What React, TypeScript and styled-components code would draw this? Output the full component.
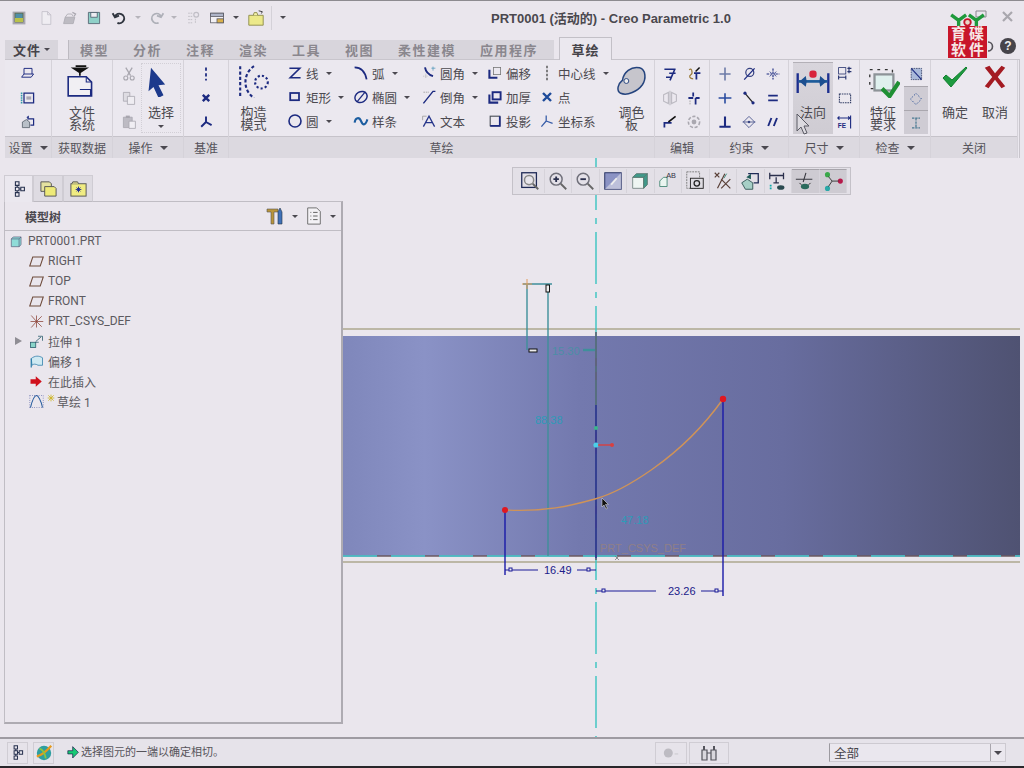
import React from "react";
import styled, { createGlobalStyle } from "styled-components";

const NAVY = "#1c2a80";
const GREY = "#a8a6ae";
const TEAL = "#3f8f9a";

const Global = createGlobalStyle`
  html, body { margin: 0; padding: 0; background: #eae6ed; }
  body { font-family: "Liberation Sans", "Noto Sans CJK SC", sans-serif; }
`;

const icons: Record<string, React.ReactNode> = {
  app: (<><rect x="2" y="2" width="16" height="16" fill="#a9a7b0" /><rect x="5" y="4" width="10" height="11" fill="#4f8fa8" stroke="#5b6a48" /><rect x="5" y="10" width="10" height="5" fill="#b9c24a" /></>),
  newFile: (<path d="M5 2h7l4 4v12H5z M12 2v4h4" fill="#efedf2" stroke="#c0bec6" />),
  open: (<><path d="M2 17l2-8h12l-2 8z" fill="#bdbbc2" stroke="#aaa8b0" /><path d="M4 9l3-4h5l2 3" fill="none" stroke="#aaa8b0" /><path d="M13 3l4 2-2 3" fill="none" stroke="#aaa8b0" strokeWidth="1.5" /></>),
  save: (<><path d="M3 3h14v14H3z" fill="#8fd0c8" stroke="#4b5a6a" /><rect x="6" y="3" width="8" height="6" fill="#eeecf2" stroke="#4b5a6a" /></>),
  undo: (<path d="M5 8a6 6 0 1 1 3 8M2 4l3 5 5-2" fill="none" stroke="#30353f" strokeWidth="2.4" />),
  redo: (<path d="M15 8a6 6 0 1 0-3 8M18 4l-3 5-5-2" fill="none" stroke="#aeb0b8" strokeWidth="2.2" />),
  regen: (<><path d="M4 4h5M4 8h5M4 12h5M4 16h5M13 16v-6" stroke="#b8b6bc" strokeDasharray="2 1" fill="none" /><circle cx="14" cy="6" r="3" fill="none" stroke="#c0bec6" strokeWidth="1.5" /></>),
  windows: (<><rect x="2" y="4" width="16" height="12" fill="#f2f0f4" stroke="#5a5a64" /><rect x="2" y="4" width="16" height="4" fill="#aeb4c8" stroke="#5a5a64" /><rect x="10" y="11" width="8" height="5" fill="#d9b04a" stroke="#5a5a64" /></>),
  folder: (<><path d="M2 7h16v11H2z" fill="#ece98a" stroke="#8b8a4a" /><path d="M7 7l1-3h3l1 3" fill="#f3f1a8" stroke="#8b8a4a" /><path d="M13 2l4 1-1 2" stroke="#333" fill="none" /></>),
  plane: (<><path d="M2 14h12l3-4H5z" fill="none" stroke={NAVY} strokeWidth="1.2" /><path d="M5 10V3h10v7" fill="none" stroke={NAVY} strokeWidth="1.2" /></>),
  ref: (<><path d="M5 4h12v12H5z" fill="none" stroke={NAVY} strokeWidth="1.6" /><path d="M2 3v14" stroke="#39a" strokeDasharray="2 1" strokeWidth="2" /><rect x="8" y="8" width="6" height="4" fill="#a9a7b4" /></>),
  setup: (<><path d="M9 6h8v8h-4" fill="none" stroke={NAVY} strokeWidth="1.5" /><path d="M3 10l5-3 4 3v7H3z" fill="#b9c0c8" stroke="#56606a" /><path d="M8 4l3-2v4z" fill={NAVY} /></>),
  fileSys: (<><path d="M3 12h17l5 5v13H3z" fill="#f1eff3" stroke={NAVY} strokeWidth="1.5" /><path d="M20 12v5h5" fill="none" stroke={NAVY} /><path d="M14 24h10v6" fill="none" stroke={NAVY} /><path d="M8 4h12l-6 4z M14 8v3 M10 2h10" fill="#111" stroke="#111" strokeWidth="1.6" /></>),
  cut2: (<><path d="M6 2l6 10M14 2L8 12" stroke={GREY} strokeWidth="1.6" fill="none" /><circle cx="6" cy="15" r="2.5" fill="none" stroke={GREY} strokeWidth="1.4" /><circle cx="14" cy="15" r="2.5" fill="none" stroke={GREY} strokeWidth="1.4" /></>),
  copy: (<><path d="M3 3h8v11H3z" fill="#dedce2" stroke={GREY} /><path d="M8 8h9v10H8z" fill="#efedf2" stroke={GREY} /></>),
  paste: (<><path d="M3 4h11v13H3z" fill="#bdbbc3" stroke={GREY} /><path d="M10 9h8v9h-8z" fill="#f0eef3" stroke={GREY} /><rect x="6" y="2" width="5" height="3" fill={GREY} /></>),
  arrow: (<path d="M6 1l17 20-8 1 6 12-6 3-6-13-6 5z" fill="#1d3a8c" />),
  dotted: (<path d="M10 2v16" stroke={NAVY} strokeWidth="2.2" strokeDasharray="4 3" />),
  xPoint: (<path d="M6 6l8 8M14 6l-8 8" stroke={NAVY} strokeWidth="3" />),
  csys: (<path d="M10 10V3M10 10l-6 6M10 10l7 4" stroke={NAVY} strokeWidth="2.4" fill="none" />),
  construct: (<><path d="M3 2v29" stroke={NAVY} strokeWidth="2" strokeDasharray="3 2" /><path d="M16 2a18 18 0 0 0 0 30" stroke={NAVY} strokeWidth="2" strokeDasharray="3 2" fill="none" /><circle cx="23" cy="17" r="6" fill="none" stroke={NAVY} strokeWidth="2" strokeDasharray="2 2" /></>),
  line: (<path d="M3 4h13L4 16h13" fill="none" stroke={NAVY} strokeWidth="2" />),
  rect: (<rect x="4" y="5" width="11" height="9" fill="none" stroke={NAVY} strokeWidth="2.2" />),
  circle: (<circle cx="10" cy="10" r="7.5" fill="none" stroke={NAVY} strokeWidth="2" />),
  arc: (<path d="M2 3c7 0 13 5 15 15" fill="none" stroke={NAVY} strokeWidth="2.2" />),
  ellipse: (<><ellipse cx="10" cy="10" rx="8" ry="6.5" transform="rotate(-30 10 10)" fill="none" stroke={NAVY} strokeWidth="1.8" /><path d="M5 16L15 4" stroke={NAVY} strokeWidth="1.6" /></>),
  spline: (<path d="M2 12c1-7 6-7 8-2s5 7 8-2" fill="none" stroke="#1b5da0" strokeWidth="2.6" />),
  fillet: (<><path d="M5 3c1 6 4 9 10 11" fill="none" stroke={NAVY} strokeWidth="2.4" /><path d="M3 14h6M6 11v6" stroke="#aaa" strokeDasharray="1 1" /><path d="M15 2v5M13 4h5" stroke="#59b" /></>),
  chamfer: (<><path d="M3 18L15 3h3" fill="none" stroke={NAVY} strokeWidth="1.8" /><path d="M3 4h7" stroke="#999" strokeDasharray="2 1" /></>),
  textA: (<><path d="M3 17L10 4l7 13M6 12h8" fill="none" stroke="#26358a" strokeWidth="1.6" /><path d="M2 4h5M2 4v5" stroke="#999" /></>),
  offset: (<><path d="M3 6v10h10" fill="none" stroke={NAVY} strokeWidth="2.6" /><rect x="8" y="3" width="9" height="9" fill="none" stroke="#777" /></>),
  thick: (<><path d="M3 7v10h11" fill="none" stroke={NAVY} strokeWidth="2.6" /><rect x="7" y="4" width="10" height="9" fill="none" stroke={NAVY} strokeWidth="2.4" /></>),
  project: (<><rect x="4" y="4" width="12" height="12" fill="none" stroke="#4a5058" strokeWidth="1.4" /><path d="M4 16h12V4" fill="none" stroke={NAVY} strokeWidth="2.2" /></>),
  cline: (<path d="M10 1v18" stroke="#555" strokeWidth="1.8" strokeDasharray="3 2" />),
  xBlue: (<path d="M5 5l10 10M15 5L5 15" stroke="#1d4a9a" strokeWidth="3" />),
  csysThin: (<path d="M9 10V3M9 10l-6 7M9 10l8 3" stroke="#375da8" strokeWidth="1.6" fill="none" />),
  palette: (<><path d="M6 31c-5-3-3-10 2-14C9 9 17 2 26 4c7 2 7 12 3 18-5 7-16 12-23 9z" fill="#c6c5cc" stroke="#25447e" strokeWidth="1.6" /><circle cx="12" cy="18" r="2.6" fill="#eee" stroke="#25447e" /></>),
  edit1: (<path d="M3 4h14M9 9h8M16 4L10 18M5 14h6" fill="none" stroke={NAVY} strokeWidth="2" />),
  edit2: (<><path d="M4 5c3-4 5 4 2 6s-1 5 3 5" fill="none" stroke="#9a7a3a" strokeWidth="1.5" /><path d="M10 9h8M13 9v8" stroke={NAVY} strokeWidth="2.2" /><path d="M17 2l-5 5" stroke="#111" strokeWidth="1.8" /></>),
  mirror: (<path d="M2 6l6-3v14l-6-3zM18 6l-6-3v14l6-3zM10 1v18" fill="none" stroke="#bcbac2" strokeWidth="1.4" />),
  divide: (<><path d="M3 10h6M12 10h5M12 10v8M9 3v5" stroke={NAVY} strokeWidth="2.2" /><path d="M5 13v6" stroke="#999" strokeDasharray="2 1" /></>),
  trim: (<><path d="M3 17V11h9" fill="none" stroke={NAVY} strokeWidth="2.2" /><path d="M17 3L8 10" stroke="#111" strokeWidth="2" /></>),
  rotate: (<><circle cx="10" cy="10" r="7" fill="none" stroke="#aaa8b0" strokeWidth="2" strokeDasharray="4 2" /><circle cx="10" cy="10" r="3" fill="#aaa8b0" /></>),
  vert: (<path d="M10 2v16M3 10h14" stroke="#6d7ba8" strokeWidth="2" />),
  tangent: (<><circle cx="11" cy="8" r="5" fill="none" stroke="#333f7f" strokeWidth="1.5" /><path d="M4 17L17 3" stroke={NAVY} strokeWidth="1.6" /></>),
  midpt: (<><path d="M2 10h5M13 10h5M10 3v14" stroke={NAVY} strokeWidth="1.4" strokeDasharray="3 1" /><path d="M6 7l3 3-3 3M14 7l-3 3 3 3" fill="none" stroke={NAVY} /></>),
  horiz: (<path d="M2 10h16M10 4v13" stroke="#2a4ba0" strokeWidth="2" />),
  coinc: (<><path d="M4 3l12 14" stroke="#222" strokeWidth="1.6" /><circle cx="5" cy="4" r="2" fill={NAVY} /><circle cx="15" cy="16" r="2" fill={NAVY} /></>),
  equal: (<path d="M4 7h12M4 13h12" stroke={NAVY} strokeWidth="2.2" />),
  perp: (<path d="M10 3v13M3 16h14" stroke={NAVY} strokeWidth="2.6" />),
  sym: (<><path d="M2 10h16" stroke="#3a4684" /><path d="M10 3l7 7-7 7-7-7z" fill="none" stroke="#3a4684" /><circle cx="10" cy="10" r="1.6" fill="#3a4684" /></>),
  par: (<path d="M8 5L4 15M15 5l-4 10" stroke={NAVY} strokeWidth="2.4" />),
  normal: (<><path d="M3 7v22M37 7v22" stroke="#1d2f8f" strokeWidth="2.6" /><path d="M4 16h32" stroke="#1c5b9a" strokeWidth="3" /><path d="M13 16l-8 0 7-6zM27 16l8 0-7-6zM13 16l-8 0 7 6zM27 16l8 0-7 6z" fill="#1c4f90" /><rect x="16" y="4" width="8" height="8" rx="3" fill="#d8233a" /></>),
  dimTop: (<><rect x="2" y="2" width="9" height="8" fill="none" stroke="#28346f" /><path d="M13 3h5M13 7h5M15 1v8M2 14h9M2 12v5M11 12v5" stroke="#28346f" strokeWidth="1.4" /></>),
  dimBox: (<rect x="3" y="5" width="14" height="11" fill="none" stroke="#333f66" strokeWidth="1.4" strokeDasharray="2 1" />),
  dimFe: (<><path d="M2 5h13M17 2v16M3 3l-2 2 2 2M14 3l2 2-2 2" stroke={NAVY} strokeWidth="1.4" fill="none" /><text x="1" y="17" fontSize="8" fontWeight="700" fill={NAVY} fontFamily="Liberation Sans">FE</text></>),
  feature: (<><rect x="4" y="6" width="24" height="20" fill="none" stroke="#333" strokeWidth="1.4" strokeDasharray="3 5" /><rect x="9" y="11" width="20" height="17" fill="#dff0ee" stroke="#8d9398" strokeWidth="2.4" /><path d="M17 26l8 8 10-15" fill="none" stroke="#1f8f34" strokeWidth="4.4" /></>),
  check1: (<><rect x="4" y="3" width="13" height="14" fill="#a9b9d9" stroke="#333f66" strokeDasharray="2 1" /><path d="M4 3l13 14" stroke={NAVY} strokeWidth="1.4" /></>),
  check2: (<path d="M10 3l7 7-7 7-7-7z" fill="none" stroke="#385a9a" strokeWidth="1.2" strokeDasharray="2 2" />),
  check3: (<path d="M5 4h10M5 16h10M10 4v12" stroke="#4b7a92" strokeWidth="1.6" strokeDasharray="3 1" />),
  ok: (<path d="M2 14l8 9L26 4l-1-1-14 13-6-5z" fill="#1d9a3f" stroke="#12802f" strokeLinejoin="round" />),
  cancel: (<path d="M3 4l5-2 6 8 7-8 4 2-8 10 8 10-4 2-7-9-7 9-4-2 8-10z" fill="#a41a22" />),
  treeTab: (<path d="M6 2h4v4H6zM6 8h4v4H6zM6 14h4v4H6zM12 8h4v4h-4zM8 6v2M8 12v2M10 10h2" fill="none" stroke="#26304e" strokeWidth="1.2" />),
  foldersTab: (<><path d="M2 3h9l2 2v8H2z" fill="#e4e2a0" stroke="#555" /><path d="M6 8h10l2 2v8H6z" fill="#eeea78" stroke="#555" /></>),
  starFolder: (<><rect x="2" y="5" width="16" height="13" fill="#f0ec82" stroke="#555" /><path d="M3 5l1-2h5l1 2" fill="#dcd98a" stroke="#555" /><path d="M10 8v6M7 11h6M8 9l4 4M12 9l-4 4" stroke="#1f2a90" /></>),
  tools: (<><path d="M2 3h11v3H9v12H6V6H2z" fill="#b9953a" stroke="#555" strokeWidth=".6" /><path d="M13 18V6l2-4 2 4v12z" fill="#3f71b8" stroke="#234" strokeWidth=".6" /></>),
  listDoc: (<><path d="M3 1h10l4 4v14H3z" fill="#f3f1f5" stroke="#666" /><path d="M6 6h1M9 6h5M6 10h1M9 10h5M6 14h1M9 14h5" stroke="#555" /></>),
  part: (<><path d="M2 6l3-3h12v12l-3 3H2z" fill="#8fdcd8" stroke="#557" /><path d="M2 6h12v12M14 6l3-3" fill="none" stroke="#557" /></>),
  datum: (<path d="M1 16L5 4h14l-4 12z" fill="none" stroke="#6d4a3a" strokeWidth="1.4" />),
  csysTree: (<path d="M10 10L3 2M10 10L17 3M10 10L3 18M10 10l7 7M10 10H2M10 10h9M10 2v16" stroke="#8a4034" strokeWidth="1" fill="none" />),
  extrude: (<><rect x="2" y="11" width="7" height="7" fill="#88d4c8" stroke="#256" /><path d="M9 10l7-6M12 3h6v6M9 11h4" fill="none" stroke="#256" /></>),
  offsetTree: (<><path d="M3 6c5-4 10-4 15-1v10H12c-3-2-6-2-8 0z" fill="#cfe9f2" stroke="#2a7ba8" /><path d="M3 6v12" stroke="#2a7ba8" strokeWidth="1.6" /></>),
  insert: (<path d="M2 7h7V3l8 7-8 7v-4H2z" fill="#d0101c" />),
  sketchTree: (<><path d="M2 18C5 6 8 2 10 2s6 6 8 16" fill="none" stroke="#2a5fa0" strokeWidth="1.4" /><path d="M1 2h18M1 2v16M19 2v16M1 18h18" stroke="#2c3c90" strokeWidth=".8" strokeDasharray="1 2" /></>),
  star: (<path d="M6 1v10M1 6h10M2 2l8 8M10 2l-8 8" stroke="#cbb21e" strokeWidth="1.2" />),
  greenArrow: (<path d="M1 7h6V2l7 7-7 7v-5H1z" fill="#17c874" stroke="#114" strokeWidth=".8" />),
  globe: (<><circle cx="10" cy="10" r="8" fill="#2f9fa0" /><path d="M2 14C8 12 13 8 18 2" stroke="#e69a1c" strokeWidth="2.4" fill="none" /><path d="M5 5c3 1 6 5 7 11" stroke="#8cc63f" strokeWidth="2" fill="none" /></>),
  led: (<><circle cx="7" cy="10" r="5" fill="#bdbbc2" /><path d="M14 11h4" stroke="#d6d4da" strokeWidth="2" /></>),
  binoculars: (<><path d="M3 7h5v10H3zM12 7h5v10h-5zM8 10h4" fill="#d9d7dd" stroke="#54545c" strokeWidth="1.2" /><path d="M5 7V3M15 7V3" stroke="#54545c" strokeWidth="2" /></>),
  vZoomFit: (<><rect x="3" y="3" width="16" height="16" fill="none" stroke="#1f2a56" strokeWidth="1.4" /><circle cx="11" cy="11" r="5" fill="#e8e6ec" stroke="#888" strokeWidth="1.6" /><path d="M15 15l6 6" stroke="#666" strokeWidth="2" /></>),
  vZoomIn: (<><circle cx="10" cy="10" r="6.5" fill="none" stroke="#70707a" strokeWidth="1.6" /><path d="M7 10h6M10 7v6" stroke="#2a2f4c" strokeWidth="2" /><path d="M15 15l6 6" stroke="#666" strokeWidth="2" /></>),
  vZoomOut: (<><circle cx="10" cy="10" r="6.5" fill="none" stroke="#70707a" strokeWidth="1.6" /><path d="M7 10h6" stroke="#2a2f4c" strokeWidth="2" /><path d="M15 15l6 6" stroke="#666" strokeWidth="2" /></>),
  vRefit: (<><rect x="3" y="3" width="18" height="18" fill="#8b93c4" stroke="#1e2a5c" /><path d="M3 21L21 3v18z" fill="#e7e5ec" opacity=".55" /><path d="M10 16l6-7" stroke="#eee" strokeWidth="2" /></>),
  vCube: (<><path d="M4 8h12v12H4z" fill="#eef5f2" stroke="#7b8a88" /><path d="M4 8l4-4h12l-4 4zM16 8l4-4v12l-4 4z" fill="#3f9a8a" stroke="#5a7a72" /></>),
  vAb: (<><path d="M3 12l4-4h4v10H3z" fill="#eaf5f0" stroke="#4a8a78" /><text x="10" y="9" fontSize="8" fill="#334" fontFamily="Liberation Sans">AB</text></>),
  vCamera: (<><rect x="3" y="2" width="14" height="18" fill="none" stroke="#777" strokeDasharray="2 1" /><rect x="7" y="9" width="14" height="11" fill="#dedce2" stroke="#222" /><circle cx="14" cy="14.5" r="3" fill="none" stroke="#222" strokeWidth="1.4" /></>),
  vDatum: (<><path d="M3 3l5 5M8 3L3 8M14 4l-8 16M10 10l10 10M20 10L10 20" stroke="#5a4038" strokeWidth="1.3" /><path d="M16 4l-3 5" stroke="#3a8a7a" /></>),
  vSaved: (<><path d="M10 4h11v10h-5" fill="none" stroke="#1f2a56" strokeWidth="1.4" /><path d="M3 14l6-4 6 4v7H7z" fill="#a6cfc6" stroke="#355" /><path d="M8 8l5-4v6z" fill="#1f5a58" /></>),
  vDims: (<><path d="M3 3v7M18 3v7M3 6h15M10 8v6M7 14h6" stroke="#2a2f4c" strokeWidth="1.4" /><ellipse cx="15" cy="19" rx="4" ry="2.5" fill="#2a4a50" /><path d="M3 17h2M3 20h2" stroke="#1aa" strokeWidth="2" /></>),
  vConstr: (<><path d="M2 9h10M12 9h8M13 2l-3 10" stroke="#3a3a42" strokeWidth="1.2" /><ellipse cx="12" cy="17" rx="4.5" ry="3" fill="#2a6a5c" /><path d="M8 15l-2-2M16 15l2-2" stroke="#222" /></>),
  vVerts: (<><circle cx="6" cy="4" r="2.8" fill="#3aa84a" /><circle cx="6" cy="19" r="2.8" fill="#2aa8a8" /><circle cx="20" cy="11" r="2.8" fill="#b5184a" /><path d="M7 6l4 5-4 6M11 11h7" stroke="#333" fill="none" /></>),
};

const Svg = styled.svg`
  display: block;
  flex: none;
`;

function Icon({ name, size = 16, box = 20 }: { name: string; size?: number; box?: number }) {
  return (
    <Svg width={size} height={size} viewBox={`0 0 ${box} ${box}`}>
      {icons[name]}
    </Svg>
  );
}

const Page = styled.div`
  width: 1024px;
  height: 768px;
  display: flex;
  flex-direction: column;
  background: #eae6ed;
  overflow: hidden;
  position: relative;
  border-top: 1px solid #8d8b90;
  box-sizing: border-box;
  color: #4c4a50;
`;

const TitleBar = styled.div`
  height: 36px;
  flex: none;
  display: flex;
  align-items: center;
  padding-bottom: 3px;
  box-sizing: border-box;
`;
const Quick = styled.div`
  width: 491px;
  flex: none;
  display: flex;
  align-items: center;
  padding: 0 0 0 11px;
  box-sizing: border-box;
  height: 100%;
`;
const QuickBtn = styled.span<{ $w: number }>`
  width: ${(p) => p.$w}px;
  display: flex;
  justify-content: flex-start;
  align-items: center;
  flex: none;
`;
const Caret = styled.span<{ $light?: boolean; $small?: boolean }>`
  display: inline-block;
  flex: none;
  width: 0;
  height: 0;
  border-left: ${(p) => (p.$small ? 3 : 4)}px solid transparent;
  border-right: ${(p) => (p.$small ? 3 : 4)}px solid transparent;
  border-top: ${(p) => (p.$small ? 3 : 4)}px solid ${(p) => (p.$light ? "#b6b4bb" : "#4b4950")};
`;
const QuickSep = styled.span`
  width: 1px;
  height: 24px;
  background: #d4d1d8;
  margin-right: 8px;
`;
const Title = styled.div`
  font-size: 13px;
  font-weight: 700;
  color: #4a484e;
  white-space: nowrap;
`;

const Logo = styled.div`
  position: absolute;
  left: 948px;
  top: 12px;
  width: 40px;
  height: 45px;
  display: flex;
  flex-direction: column;
`;
const LogoBadge = styled.div`
  width: 39px;
  height: 32px;
  margin-top: -1px;
  background: #c8162a;
  color: #f6e6e6;
  font-size: 15px;
  font-weight: 700;
  line-height: 16px;
  letter-spacing: 3px;
  padding-left: 3px;
  box-sizing: border-box;
  white-space: nowrap;
`;
const WindowGlyphs = styled.svg`
  position: absolute;
  left: 972px;
  top: 8px;
`;
const HelpBtn = styled.div`
  position: absolute;
  left: 1000px;
  top: 37px;
  width: 16px;
  height: 16px;
  border-radius: 50%;
  background: #46444a;
  color: #eee;
  font-size: 12px;
  font-weight: 700;
  line-height: 16px;
  text-align: center;
`;

const TabRow = styled.div`
  height: 22px;
  flex: none;
  display: flex;
  align-items: stretch;
  padding-left: 5px;
`;
const FileTab = styled.div`
  width: 53px;
  background: #d8d5dc;
  display: flex;
  align-items: center;
  justify-content: center;
  gap: 3px;
  font-size: 13px;
  font-weight: 700;
  letter-spacing: 1px;
  color: #46444a;
  margin-right: 10px;
  margin-top: 3px;
`;
const TabStrip = styled.div`
  width: 486px;
  background: #d8d5dc;
  display: flex;
  align-items: center;
  gap: 24px;
  padding: 0 0 0 11px;
  box-sizing: border-box;
  margin-top: 3px;
  border-left: 1px solid #bdbac1;
`;
const Tab = styled.span`
  font-size: 13px;
  font-weight: 700;
  letter-spacing: 1.5px;
  color: #8a878e;
  white-space: nowrap;
`;
const ActiveTab = styled.div`
  width: 53px;
  margin-left: 5px;
  background: #ebe8ef;
  border: 1px solid #c3c0c7;
  border-bottom: 0;
  box-sizing: border-box;
  display: flex;
  align-items: center;
  justify-content: center;
  font-size: 13px;
  font-weight: 700;
  letter-spacing: 1px;
  color: #46444a;
  margin-bottom: -1px;
  position: relative;
  z-index: 1;
`;

const Ribbon = styled.div`
  flex: none;
  margin: 0 5px;
  width: 1015px;
  height: 99px;
  display: flex;
  border-top: 1px solid #c8c5cc;
  border-right: 1px solid #c8c5cc;
  box-sizing: border-box;
  background: #ebe8ef;
`;
const GroupBox = styled.div<{ $w: number }>`
  width: ${(p) => p.$w}px;
  flex: none;
  display: flex;
  flex-direction: column;
  border-right: 1px solid #d5d2d9;
  box-sizing: border-box;
`;
const GroupBody = styled.div<{ $pad?: number; $center?: boolean }>`
  height: 76px;
  flex: none;
  display: flex;
  align-items: stretch;
  justify-content: ${(p) => (p.$center ? "center" : "flex-start")};
  padding-left: ${(p) => p.$pad ?? 0}px;
  box-sizing: border-box;
`;
const GroupFoot = styled.div`
  height: 22px;
  flex: none;
  background: #dcd9e0;
  border-top: 1px solid #c6c3ca;
  box-sizing: border-box;
  display: flex;
  align-items: center;
  justify-content: center;
  gap: 7px;
  font-size: 12px;
  color: #55535a;
  white-space: nowrap;
`;
const IconCol = styled.div<{ $w?: number }>`
  width: ${(p) => p.$w ?? 24}px;
  flex: none;
  display: flex;
  flex-direction: column;
  justify-content: flex-start;
  padding-top: 2px;
  box-sizing: border-box;
`;
const IconCell = styled.div<{ $pressed?: boolean }>`
  height: 24px;
  flex: none;
  display: flex;
  align-items: center;
  justify-content: center;
  background: ${(p) => (p.$pressed ? "#cfccd4" : "transparent")};
  border-top: ${(p) => (p.$pressed ? "1px solid #aaa7ae" : "0")};
  box-sizing: border-box;
`;
const BigButton = styled.div<{ $w: number; $pressed?: boolean }>`
  width: ${(p) => p.$w}px;
  flex: none;
  display: flex;
  flex-direction: column;
  align-items: center;
  padding-top: 4px;
  box-sizing: border-box;
  background: ${(p) => (p.$pressed ? "linear-gradient(#d8d5dc, #cfccd3)" : "transparent")};
  border-top: ${(p) => (p.$pressed ? "1px solid #b3b0b7" : "0")};
  margin: ${(p) => (p.$pressed ? "2px 0 2px" : "0")};
  position: relative;
`;
const IconSlot = styled.div<{ $h: number }>`
  height: ${(p) => p.$h}px;
  flex: none;
  display: flex;
  align-items: flex-start;
  justify-content: center;
`;
const BigLabel = styled.div`
  font-size: 13px;
  line-height: 12px;
  text-align: center;
  color: #4c4a50;
  white-space: pre-line;
`;
const SelectBox = styled.div`
  width: 40px;
  margin: 3px 0;
  flex: none;
  border: 1px dotted #d2cfd6;
  box-sizing: border-box;
  display: flex;
  flex-direction: column;
  align-items: center;
  padding-top: 3px;
`;
const SelectLabel = styled.div`
  font-size: 13px;
  line-height: 16px;
  color: #4c4a50;
  margin-bottom: 4px;
`;
const ToolCol = styled.div<{ $w: number }>`
  width: ${(p) => p.$w}px;
  flex: none;
  display: flex;
  flex-direction: column;
  padding-top: 1px;
`;
const ToolRow = styled.div`
  height: 24px;
  flex: none;
  display: flex;
  align-items: center;
  gap: 3px;
  font-size: 12.5px;
  color: #4c4a50;
  white-space: nowrap;
`;
const ToolCaret = styled.span`
  margin-left: 4px;
  display: flex;
`;

const Main = styled.div`
  flex: 1;
  min-height: 0;
  display: flex;
`;
const Side = styled.aside`
  width: 339px;
  flex: none;
  margin: 17px 0 13px 4px;
  display: flex;
  flex-direction: column;
`;
const SideTabs = styled.div`
  height: 27px;
  flex: none;
  display: flex;
  align-items: stretch;
  margin-bottom: -1px;
`;
const SideTab = styled.div<{ $active?: boolean }>`
  width: ${(p) => (p.$active ? 29 : 30)}px;
  display: flex;
  align-items: center;
  justify-content: center;
  background: ${(p) => (p.$active ? "#ebe8ef" : "#dedbe2")};
  border: 1px solid #cfccd3;
  border-bottom: ${(p) => (p.$active ? "0" : "1px solid #bdbac1")};
  box-sizing: border-box;
  position: relative;
  z-index: ${(p) => (p.$active ? 1 : 0)};
`;
const SidePanel = styled.div`
  flex: 1;
  min-height: 0;
  border: 1px solid #c0bdc4;
  border-right: 2px solid #aeabb2;
  border-bottom: 2px solid #aeabb2;
  box-sizing: border-box;
  display: flex;
  flex-direction: column;
`;
const TreeHead = styled.div`
  height: 28px;
  flex: none;
  display: flex;
  align-items: center;
  padding: 0 5px 0 20px;
  border-bottom: 1px solid #c0bdc4;
`;
const TreeTitle = styled.div`
  font-size: 12px;
  font-weight: 700;
  color: #4a484e;
  margin-right: auto;
`;
const TreeTool = styled.span<{ $w: number }>`
  width: ${(p) => p.$w}px;
  display: flex;
  align-items: center;
  justify-content: space-between;
`;
const Tree = styled.ul`
  list-style: none;
  margin: 0;
  padding: 0;
`;
const TreeRow = styled.li<{ $indent: number; $gap?: number }>`
  height: 20px;
  display: flex;
  align-items: center;
  padding-left: ${(p) => p.$indent}px;
  gap: ${(p) => p.$gap ?? 4}px;
  font-family: Roboto, "Noto Sans CJK SC", sans-serif;
  font-size: 12px;
  color: #5c5a60;
  white-space: nowrap;
`;
const Twist = styled.span`
  width: 0;
  height: 0;
  border-top: 4px solid transparent;
  border-bottom: 4px solid transparent;
  border-left: 7px solid #8f8d94;
  margin: 0 3px 0 -14px;
  flex: none;
`;
const TinyStar = styled.span`
  margin: -6px -2px 0 -1px;
  display: flex;
`;

const Canvas = styled.main`
  flex: 1;
  min-width: 0;
  position: relative;
`;
const Drawing = styled.svg`
  display: block;
  width: 100%;
  height: 100%;
`;
const ViewBar = styled.div`
  position: absolute;
  left: 169px;
  top: 9px;
  width: 339px;
  height: 28px;
  display: flex;
  align-items: center;
  padding-left: 4px;
  box-sizing: border-box;
  background: #e3e0e7;
  border: 1px solid #c4c1c8;
`;
const ViewBtn = styled.div<{ $pressed?: boolean }>`
  width: 27.5px;
  height: 24px;
  flex: none;
  display: flex;
  align-items: center;
  justify-content: center;
  box-sizing: border-box;
  background: ${(p) => (p.$pressed ? "#cecbd2" : "transparent")};
  border-right: 1px solid #d6d3da;
  border-top: ${(p) => (p.$pressed ? "1px solid #a7a4ab" : "0")};
`;
const GhostCursor = styled.div`
  position: absolute;
  left: 796px;
  top: 112px;
`;

const Status = styled.footer`
  height: 31px;
  flex: none;
  display: flex;
  align-items: center;
  border-top: 2px solid #9e9ba2;
  border-bottom: 2px solid #28262a;
  box-sizing: border-box;
  background: #e6e3ea;
  padding-left: 7px;
`;
const StatusBtn = styled.div<{ $w: number; $m?: number }>`
  width: ${(p) => p.$w}px;
  height: 22px;
  flex: none;
  display: flex;
  align-items: center;
  justify-content: center;
  border: 1px solid #d0cdd4;
  box-sizing: border-box;
  margin-right: ${(p) => p.$m ?? 0}px;
`;
const PromptArrow = styled.span`
  display: flex;
  margin-bottom: 3px;
`;
const StatusText = styled.div`
  font-size: 11px;
  color: #56545a;
  margin: 0 0 3px 1px;
  width: 574px;
  flex: none;
  white-space: nowrap;
`;
const Select = styled.div`
  width: 177px;
  height: 19px;
  flex: none;
  margin-left: 100px;
  display: flex;
  align-items: center;
  box-sizing: border-box;
  border: 1px solid #cdcad1;
  border-left: 1px solid #9c9aa0;
  background: #eae7ee;
  font-size: 12.5px;
  color: #46444a;
  padding-left: 4px;
`;
const SelectArrow = styled.span`
  margin-left: auto;
  width: 14px;
  height: 100%;
  display: flex;
  align-items: center;
  justify-content: center;
  border-left: 1px solid #a9a6ad;
`;

function Group({ w, label, caret, children, pad, center }: { w: number; label: string; caret?: boolean; children: React.ReactNode; pad?: number; center?: boolean }) {
  return (
    <GroupBox $w={w}>
      <GroupBody $pad={pad} $center={center}>{children}</GroupBody>
      <GroupFoot>
        {label}
        {caret && <Caret />}
      </GroupFoot>
    </GroupBox>
  );
}

function Col({ names, w }: { names: string[]; w?: number }) {
  return (
    <IconCol $w={w}>
      {names.map((n) => (
        <IconCell key={n}>
          <Icon name={n} />
        </IconCell>
      ))}
    </IconCol>
  );
}

function Tools({ w, rows }: { w: number; rows: [string, string, boolean?][] }) {
  return (
    <ToolCol $w={w}>
      {rows.map(([n, t, c]) => (
        <ToolRow key={t}>
          <Icon name={n} />
          {t}
          {c && (
            <ToolCaret>
              <Caret $small />
            </ToolCaret>
          )}
        </ToolRow>
      ))}
    </ToolCol>
  );
}

const tabs = ["模型", "分析", "注释", "渲染", "工具", "视图", "柔性建模", "应用程序"];
const views = ["vZoomFit", "vZoomIn", "vZoomOut", "vRefit", "vCube", "vAb", "vCamera", "vDatum", "vSaved", "vDims", "vConstr", "vVerts"];
const treeRows: [string, string, number, boolean?][] = [
  ["part", "PRT0001.PRT", 5],
  ["datum", "RIGHT", 24],
  ["datum", "TOP", 24],
  ["datum", "FRONT", 24],
  ["csysTree", "PRT_CSYS_DEF", 24],
  ["extrude", "拉伸 1", 24, true],
  ["offsetTree", "偏移 1", 24],
  ["insert", "在此插入", 24],
];

export default function App() {
  return (
    <Page>
      <Global />
      <TitleBar>
        <Quick>
          <QuickBtn $w={27}><Icon name="app" /></QuickBtn>
          <QuickBtn $w={24}><Icon name="newFile" /></QuickBtn>
          <QuickBtn $w={24}><Icon name="open" /></QuickBtn>
          <QuickBtn $w={25}><Icon name="save" /></QuickBtn>
          <QuickBtn $w={24}><Icon name="undo" /></QuickBtn>
          <QuickBtn $w={14}><Caret $light $small /></QuickBtn>
          <QuickBtn $w={22}><Icon name="redo" /></QuickBtn>
          <QuickBtn $w={14}><Caret $light $small /></QuickBtn>
          <QuickBtn $w={24}><Icon name="regen" /></QuickBtn>
          <QuickBtn $w={24}><Icon name="windows" /></QuickBtn>
          <QuickBtn $w={14}><Caret $small /></QuickBtn>
          <QuickBtn $w={24}><Icon name="folder" size={18} /></QuickBtn>
          <QuickSep />
          <Caret $small />
        </Quick>
        <Title>PRT0001 (活动的) - Creo Parametric 1.0</Title>
      </TitleBar>
      <WindowGlyphs width="44" height="44" viewBox="0 0 44 44">
        <path d="M4 2h10v6H4z" fill="none" stroke="#8a888f" />
        <path d="M31 3l9 9M40 3l-9 9" stroke="#a9a7ae" strokeWidth="2.2" />
        <path d="M16 33a4.5 4.5 0 0 1 0 9" fill="none" stroke="#55535a" strokeWidth="1.6" />
      </WindowGlyphs>
      <Logo>
        <svg width="39" height="15" viewBox="0 0 39 15">
          <path d="M2 2l8 6 8-6M10 8v7M21 2l8 6 8-6M29 8v7" fill="none" stroke="#1f9a3c" strokeWidth="3.6" />
          <circle cx="19.5" cy="10" r="3.5" fill="#e8d8c8" stroke="#c8162a" strokeWidth="2" />
        </svg>
        <LogoBadge>育碟<br />软件</LogoBadge>
      </Logo>
      <HelpBtn>?</HelpBtn>
      <TabRow>
        <FileTab>文件<Caret $small /></FileTab>
        <TabStrip>{tabs.map((t) => <Tab key={t}>{t}</Tab>)}</TabStrip>
        <ActiveTab>草绘</ActiveTab>
      </TabRow>
      <Ribbon>
        <Group w={47} label="设置" caret center>
          <Col names={["plane", "ref", "setup"]} />
        </Group>
        <Group w={61} label="获取数据" center>
          <BigButton $w={50}>
            <IconSlot $h={43}><Icon name="fileSys" size={34} box={32} /></IconSlot>
            <BigLabel>{"文件\n系统"}</BigLabel>
          </BigButton>
        </Group>
        <Group w={71} label="操作" caret pad={4}>
          <IconCol $w={24}>
            <IconCell><Icon name="cut2" /></IconCell>
            <IconCell><Icon name="copy" /></IconCell>
            <IconCell><Icon name="paste" /></IconCell>
          </IconCol>
          <SelectBox>
            <IconSlot $h={38}><Icon name="arrow" size={30} box={36} /></IconSlot>
            <SelectLabel>选择</SelectLabel>
            <Caret $small />
          </SelectBox>
        </Group>
        <Group w={45} label="基准" center>
          <Col names={["dotted", "xPoint", "csys"]} />
        </Group>
        <Group w={426} label="草绘">
          <BigButton $w={49}>
            <IconSlot $h={43}><Icon name="construct" size={34} box={32} /></IconSlot>
            <BigLabel>{"构造\n模式"}</BigLabel>
          </BigButton>
          <ToolCol $w={9} />
          <Tools w={66} rows={[["line", "线", true], ["rect", "矩形", true], ["circle", "圆", true]]} />
          <Tools w={68} rows={[["arc", "弧", true], ["ellipse", "椭圆", true], ["spline", "样条"]]} />
          <Tools w={66} rows={[["fillet", "圆角", true], ["chamfer", "倒角", true], ["textA", "文本"]]} />
          <Tools w={52} rows={[["offset", "偏移"], ["thick", "加厚"], ["project", "投影"]]} />
          <Tools w={71} rows={[["cline", "中心线", true], ["xBlue", "点"], ["csysThin", "坐标系"]]} />
          <BigButton $w={43}>
            <IconSlot $h={43}><Icon name="palette" size={34} box={36} /></IconSlot>
            <BigLabel>{"调色\n板"}</BigLabel>
          </BigButton>
        </Group>
        <Group w={55} label="编辑" center>
          <Col names={["edit1", "mirror", "trim"]} />
          <Col names={["edit2", "divide", "rotate"]} />
        </Group>
        <Group w={79} label="约束" caret center>
          <Col names={["vert", "horiz", "perp"]} />
          <Col names={["tangent", "coinc", "sym"]} />
          <Col names={["midpt", "equal", "par"]} />
        </Group>
        <Group w={71} label="尺寸" caret pad={4}>
          <BigButton $w={40} $pressed>
            <IconSlot $h={40}><Icon name="normal" size={36} box={40} /></IconSlot>
            <BigLabel>法向</BigLabel>
          </BigButton>
          <Col names={["dimTop", "dimBox", "dimFe"]} />
        </Group>
        <Group w={71} label="检查" caret pad={2}>
          <BigButton $w={42}>
            <IconSlot $h={43}><Icon name="feature" size={34} box={36} /></IconSlot>
            <BigLabel>{"特征\n要求"}</BigLabel>
          </BigButton>
          <IconCol $w={24}>
            <IconCell><Icon name="check1" /></IconCell>
            <IconCell $pressed><Icon name="check2" /></IconCell>
            <IconCell $pressed><Icon name="check3" /></IconCell>
          </IconCol>
        </Group>
        <Group w={87} label="关闭" pad={4}>
          <BigButton $w={40}>
            <IconSlot $h={43}><Icon name="ok" size={28} box={28} /></IconSlot>
            <BigLabel>确定</BigLabel>
          </BigButton>
          <BigButton $w={40}>
            <IconSlot $h={43}><Icon name="cancel" size={26} box={28} /></IconSlot>
            <BigLabel>取消</BigLabel>
          </BigButton>
        </Group>
      </Ribbon>
      <Main>
        <Side>
          <SideTabs>
            <SideTab $active><Icon name="treeTab" size={18} /></SideTab>
            <SideTab><Icon name="foldersTab" size={19} /></SideTab>
            <SideTab><Icon name="starFolder" size={19} /></SideTab>
          </SideTabs>
          <SidePanel>
            <TreeHead>
              <TreeTitle>模型树</TreeTitle>
              <TreeTool $w={40}><Icon name="tools" size={20} /><Caret $small /><span /></TreeTool>
              <TreeTool $w={31}><Icon name="listDoc" size={18} /><Caret $small /></TreeTool>
            </TreeHead>
            <Tree>
              {treeRows.map(([ic, t, ind, tw]) => (
                <TreeRow key={t} $indent={ind} $gap={ind === 5 ? 5 : 4}>
                  {tw && <Twist />}
                  <Icon name={ic} size={ind === 5 ? 13 : 15} />
                  {t}
                </TreeRow>
              ))}
              <TreeRow $indent={24}>
                <Icon name="sketchTree" size={15} />
                <TinyStar><Icon name="star" size={8} box={12} /></TinyStar>
                草绘 1
              </TreeRow>
            </Tree>
          </SidePanel>
        </Side>
        <Canvas>
          <Drawing viewBox="343 158 681 579" preserveAspectRatio="none">
            <defs>
              <linearGradient id="band" x1="0" x2="1" y1="0" y2="0">
                <stop offset="0" stopColor="#7f87bb" />
                <stop offset="0.12" stopColor="#8a92c6" />
                <stop offset="0.35" stopColor="#7379ae" />
                <stop offset="0.65" stopColor="#686d9f" />
                <stop offset="1" stopColor="#4f5272" />
              </linearGradient>
            </defs>
            <path d="M343 329h677M343 562h677" stroke="#8e8760" strokeWidth="1.2" />
            <rect x="343" y="336" width="677" height="220" fill="url(#band)" />
            <path d="M343 556h677" stroke="#6a5a60" strokeWidth="1.6" />
            <path d="M343 556h677" stroke="#47d0d8" strokeWidth="1.4" strokeDasharray="34 14" />
            <path d="M596 158V737" stroke="#39c4c0" strokeWidth="1.4" strokeDasharray="52 8 6 8" />
            <path d="M596 332V560" stroke="#5a5f70" strokeWidth="1.6" />
            <path d="M596 405V558" stroke="#1a1aa0" strokeWidth="1.1" />
            <path d="M527 284V350M548 284V556M523 284h29" stroke={TEAL} strokeWidth="1.4" />
            <path d="M527 279v10M522 284h10" stroke="#e29a58" strokeWidth="1" />
            <rect x="546" y="285" width="3.5" height="7" fill="#eee" stroke="#111" />
            <rect x="529" y="349" width="8" height="3" fill="#eee" stroke="#111" />
            <path d="M583 350h12" stroke={TEAL} strokeWidth="2.4" />
            <text x="552" y="355" fontSize="11" fill="#4c8ea6" fontFamily="Liberation Sans">15.30</text>
            <text x="535" y="424" fontSize="11" fill="#2f9ab8" fontFamily="Liberation Sans">88.38</text>
            <text x="621" y="524" fontSize="11" fill="#2f9ab8" fontFamily="Liberation Sans">47.18</text>
            <text x="600" y="552" fontSize="11" fill="#8f7f88" fontFamily="Liberation Sans">PRT_CSYS_DEF</text>
            <path d="M505 510V575M723 399V596" stroke="#1a1aa8" strokeWidth="1.4" />
            <path d="M505 510C545 512 570 506 595 499S680 460 723 399" fill="none" stroke="#cf9358" strokeWidth="1.4" />
            <circle cx="505" cy="510" r="3" fill="#e01820" />
            <circle cx="723" cy="399" r="3.2" fill="#e01820" />
            <circle cx="596" cy="428" r="2" fill="#3ab88c" />
            <circle cx="596" cy="445" r="2.6" fill="#4ad0e8" />
            <path d="M598 445h14" stroke="#d84040" strokeWidth="1.4" />
            <circle cx="612" cy="445" r="2" fill="#d84040" />
            <path d="M505 570h33M577 570h19M596 591h60M701 591h22" stroke="#1a1a98" strokeWidth="1.2" />
            <rect x="509" y="568" width="3" height="3" fill="#eee" stroke="#1a1a98" />
            <rect x="587" y="568" width="3" height="3" fill="#eee" stroke="#1a1a98" />
            <rect x="602" y="589" width="3" height="3" fill="#eee" stroke="#1a1a98" />
            <rect x="715" y="589" width="3" height="3" fill="#eee" stroke="#1a1a98" />
            <text x="544" y="574" fontSize="11" fill="#20208a" fontFamily="Liberation Sans">16.49</text>
            <text x="668" y="595" fontSize="11" fill="#20208a" fontFamily="Liberation Sans">23.26</text>
            <path d="M602 498l0 9 2-2 2 4 1.4-.6-2-4h3z" fill="#111" stroke="#eee" strokeWidth=".5" />
            <path d="M615 556l4 4M619 556l-4 4" stroke="#777" strokeWidth=".8" />
          </Drawing>
          <ViewBar>
            {views.map((v, i) => (
              <ViewBtn key={v} $pressed={i > 9}><Icon name={v} size={22} box={24} /></ViewBtn>
            ))}
          </ViewBar>
        </Canvas>
      </Main>
      <GhostCursor>
        <svg width="14" height="22" viewBox="0 0 14 22"><path d="M1 1v17l4-4 3 7 3-1-3-7h5z" fill="#dcdae0" stroke="#5a5a64" strokeWidth="1" /></svg>
      </GhostCursor>
      <Status>
        <StatusBtn $w={21} $m={5}><Icon name="treeTab" size={17} /></StatusBtn>
        <StatusBtn $w={21} $m={13}><Icon name="globe" size={18} /></StatusBtn>
        <PromptArrow><Icon name="greenArrow" size={13} box={16} /></PromptArrow>
        <StatusText>选择图元的一端以确定相切。</StatusText>
        <StatusBtn $w={32} $m={2}><Icon name="led" size={18} /></StatusBtn>
        <StatusBtn $w={40}><Icon name="binoculars" size={20} /></StatusBtn>
        <Select>全部<SelectArrow><Caret /></SelectArrow></Select>
      </Status>
    </Page>
  );
}
